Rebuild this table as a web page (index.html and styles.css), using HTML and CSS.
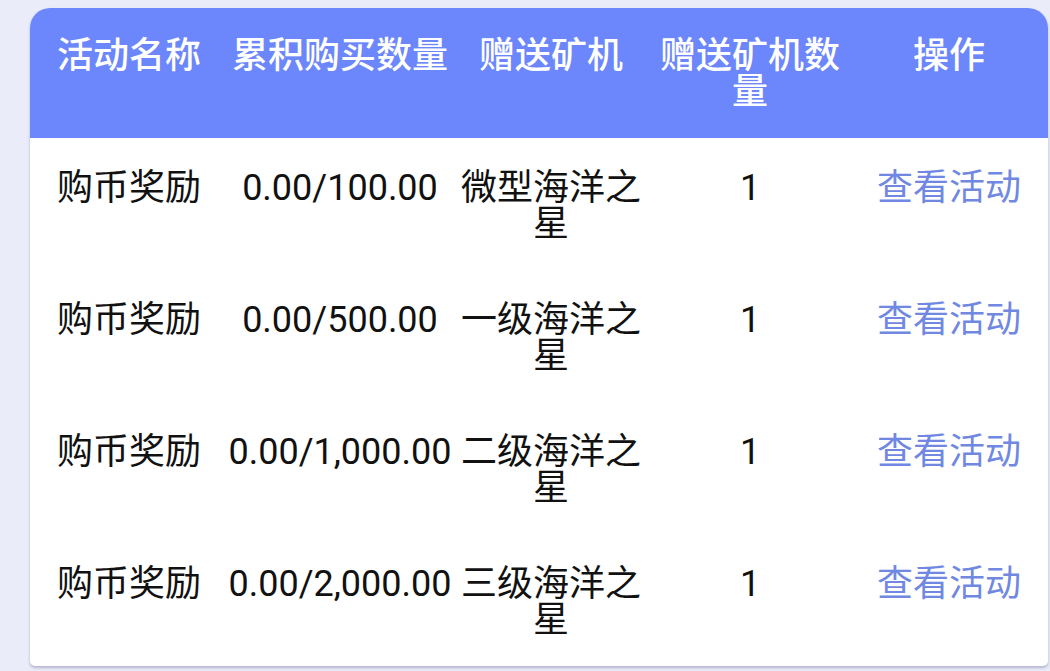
FILE: index.html
```html
<!DOCTYPE html>
<html lang="zh-CN">
<head>
<meta charset="utf-8">
<title>活动列表</title>
<link rel="stylesheet" href="styles.css">
</head>
<body>
<div class="page">
  <div class="card">
    <div class="row head">
      <div class="cell">活动名称</div>
      <div class="cell">累积购买数量</div>
      <div class="cell">赠送矿机</div>
      <div class="cell">赠送矿机数量</div>
      <div class="cell">操作</div>
    </div>
    <div class="row">
      <div class="cell">购币奖励</div>
      <div class="cell">0.00/100.00</div>
      <div class="cell">微型海洋之星</div>
      <div class="cell">1</div>
      <div class="cell link">查看活动</div>
    </div>
    <div class="row">
      <div class="cell">购币奖励</div>
      <div class="cell">0.00/500.00</div>
      <div class="cell">一级海洋之星</div>
      <div class="cell">1</div>
      <div class="cell link">查看活动</div>
    </div>
    <div class="row">
      <div class="cell">购币奖励</div>
      <div class="cell">0.00/1,000.00</div>
      <div class="cell">二级海洋之星</div>
      <div class="cell">1</div>
      <div class="cell link">查看活动</div>
    </div>
    <div class="row">
      <div class="cell">购币奖励</div>
      <div class="cell">0.00/2,000.00</div>
      <div class="cell">三级海洋之星</div>
      <div class="cell">1</div>
      <div class="cell link">查看活动</div>
    </div>
  </div>
</div>
</body>
</html>
```
FILE: styles.css
```css
html, body {
  margin: 0;
  padding: 0;
  background: #eaecfa;
  font-family: Roboto, "Noto Sans CJK SC", sans-serif;
  overflow: hidden;
}

.page {
  padding: 8px 0 0 30px;
  height: 671px;
  box-sizing: border-box;
}

.card {
  width: 1018px;
  background: #ffffff;
  border-radius: 20px 20px 5px 5px;
  overflow: hidden;
  box-shadow: 0 2px 3px rgba(110, 115, 150, 0.45);
}

.row {
  display: grid;
  grid-template-columns: 198px 224px 198px 200px 1fr;
  padding: 32px 0 28px;
  font-size: 36px;
  line-height: 36px;
  color: #111111;
  min-height: 72px;
}

.row.head {
  background: #6c86fc;
  color: #ffffff;
  font-weight: 500;
  padding: 30px 0 28px;
}

.cell {
  text-align: center;
  white-space: normal;
}

.link {
  color: #7088e2;
}
```
